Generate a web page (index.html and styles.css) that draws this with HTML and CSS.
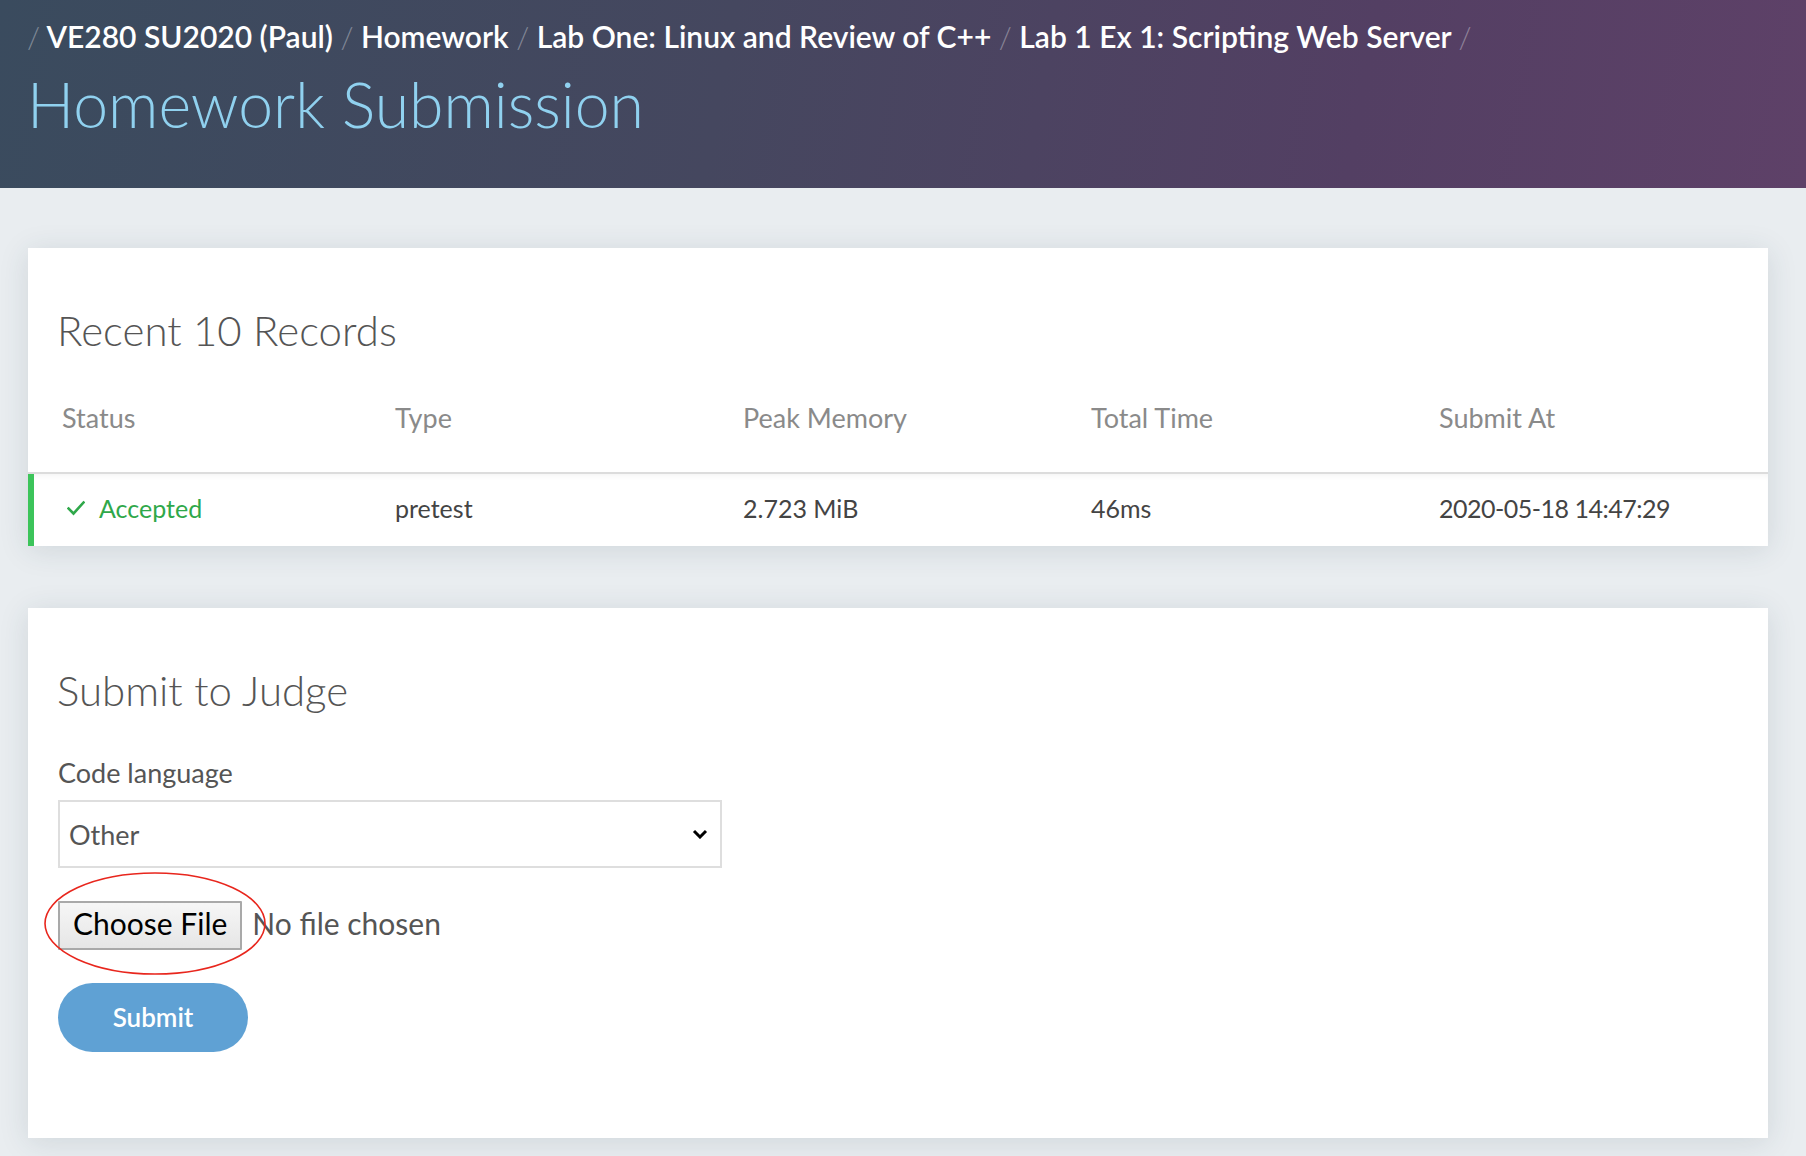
FILE: index.html
```html
<!DOCTYPE html>
<html lang="en">
<head>
<meta charset="utf-8">
<title>Homework Submission</title>
<link rel="stylesheet" href="styles.css">
</head>
<body>
<header class="hero">
  <nav class="crumbs">
    <span class="sep">/</span> <a class="crumb">VE280 SU2020 (Paul)</a> <span class="sep">/</span> <a class="crumb">Homework</a> <span class="sep">/</span> <a class="crumb">Lab One: Linux and Review of C++</a> <span class="sep">/</span> <a class="crumb">Lab 1 Ex 1: Scripting Web Server</a> <span class="sep">/</span>
  </nav>
  <h1 class="hero-title">Homework Submission</h1>
</header>
<main class="page">
  <section class="card">
    <h2 class="card-title">Recent 10 Records</h2>
    <div class="records">
      <div class="tr thead">
        <div class="cell">Status</div>
        <div class="cell">Type</div>
        <div class="cell">Peak Memory</div>
        <div class="cell">Total Time</div>
        <div class="cell">Submit At</div>
      </div>
      <div class="tr row row-accepted">
        <div class="cell status-ok">
          <svg class="check" width="18" height="16" viewBox="0 0 18 16"><path d="M1.5 8.5 L6.5 13.5 L16.5 2.5" fill="none" stroke="#2fa84a" stroke-width="2.6" stroke-linecap="square"/></svg>
          <span>Accepted</span>
        </div>
        <div class="cell">pretest</div>
        <div class="cell">2.723 MiB</div>
        <div class="cell">46ms</div>
        <div class="cell cell-date">2020-05-18 14:47:29</div>
      </div>
    </div>
  </section>
  <section class="card card-submit">
    <h2 class="card-title">Submit to Judge</h2>
    <form class="judge-form">
      <label class="field-label">Code language</label>
      <div class="select-wrap">
        <select class="select"><option>Other</option></select>
        <svg class="chev" width="16" height="10" viewBox="0 0 16 10"><path d="M2 2 L8 8 L14 2" fill="none" stroke="#000" stroke-width="3"/></svg>
      </div>
      <div class="file-row">
        <button type="button" class="file-btn">Choose File</button>
        <span class="file-name">No file chosen</span>
        <svg class="ellipse" width="224" height="105" viewBox="0 0 224 105"><ellipse cx="112" cy="52.5" rx="110" ry="50.5" fill="none" stroke="#e8261d" stroke-width="1.6"/></svg>
      </div>
      <button type="button" class="primary">Submit</button>
    </form>
  </section>
</main>
</body>
</html>
```

FILE: styles.css
```css
* { box-sizing: border-box; }
html, body { margin: 0; padding: 0; }
body {
  font-family: Lato, "Open Sans", "Noto Sans", sans-serif;
  background: #e9edf0;
  color: #555;
  min-height: 1156px;
}

.hero {
  height: 188px;
  padding: 16px 28px 0 27px;
  background: linear-gradient(100deg, #3a4b5e 0%, #45475f 40%, #533f63 75%, #5e4168 100%);
}
.crumbs {
  font-size: 30px;
  line-height: 40px;
  font-weight: 600;
  color: #fff;
  white-space: nowrap;
}
.crumb { color: #fff; }
.sep {
  color: rgba(255,255,255,0.35);
  font-weight: 300;
}
.hero-title {
  margin: 13px 0 0 0;
  font-size: 62.5px;
  line-height: 70px;
  font-weight: 300;
  color: #90d1ef;
}

.page {
  padding: 60px 38px 20px 28px;
}
.card {
  background: #fff;
  box-shadow: 0 4px 28px rgba(40, 60, 80, 0.13);
  padding-top: 56px;
}
.card + .card { margin-top: 62px; }
.card-title {
  margin: 0;
  padding-left: 29px;
  font-size: 42px;
  line-height: 52px;
  font-weight: 300;
  color: #555;
}

.records { width: 100%; }
.tr {
  display: grid;
  grid-template-columns: repeat(5, 1fr);
}
.cell { padding-left: 19px; }
.cell:first-child { padding-left: 34px; }
.thead {
  font-size: 27px;
  line-height: 32px;
  color: #8a8a8a;
  border-bottom: 2px solid #dcdcdc;
}
.thead .cell { padding-top: 46px; padding-bottom: 38px; }
.row {
  font-size: 25px;
  line-height: 30px;
  color: #444;
  height: 72px;
  box-shadow: inset 0 5px 6px -4px rgba(0,0,0,0.06);
}
.row .cell { padding-top: 19px; }
.cell-date { letter-spacing: -0.5px; }
.row-accepted { box-shadow: inset 6px 0 0 #3cc45a, inset 0 5px 6px -4px rgba(0,0,0,0.06); }
.status-ok { color: #2fa84a; display: flex; align-items: flex-start; }
.check { margin: 7px 14px 0 5px; flex: none; }

.card-submit { padding-bottom: 86px; }
.judge-form { padding: 0 30px; }
.field-label {
  display: block;
  margin-top: 41px;
  font-size: 27px;
  line-height: 32px;
  color: #555;
}
.select-wrap {
  position: relative;
  width: 664px;
  margin-top: 11px;
}
.select {
  display: block;
  width: 100%;
  height: 68px;
  -webkit-appearance: none;
  appearance: none;
  border: 2px solid #dedede;
  border-radius: 0;
  background: #fff;
  padding: 0 8px 0 9px;
  font-family: inherit;
  font-size: 27px;
  color: #555;
}
.chev {
  position: absolute;
  right: 14px;
  top: 29px;
  pointer-events: none;
}
.file-row {
  position: relative;
  display: flex;
  align-items: flex-start;
  margin-top: 33px;
}
.file-btn {
  height: 49px;
  padding: 2px 13px 7px 13px;
  border: 2px solid #a9a9a9;
  border-radius: 1px;
  background: linear-gradient(#f6f6f6, #e6e6e6);
  font-family: inherit;
  font-size: 30px;
  line-height: 36px;
  color: #000;
}
.file-name {
  margin-left: 10px;
  padding-top: 4px;
  font-size: 30px;
  line-height: 36px;
  color: #555;
}
.ellipse {
  position: absolute;
  left: -15px;
  top: -30px;
  pointer-events: none;
}
.primary {
  display: block;
  margin-top: 33px;
  width: 190px;
  height: 69px;
  border: 0;
  border-radius: 35px;
  background: #5fa1d4;
  color: #fff;
  font-family: inherit;
  font-size: 26px;
  font-weight: 600;
  padding: 0 0 2px 0;
}
```
